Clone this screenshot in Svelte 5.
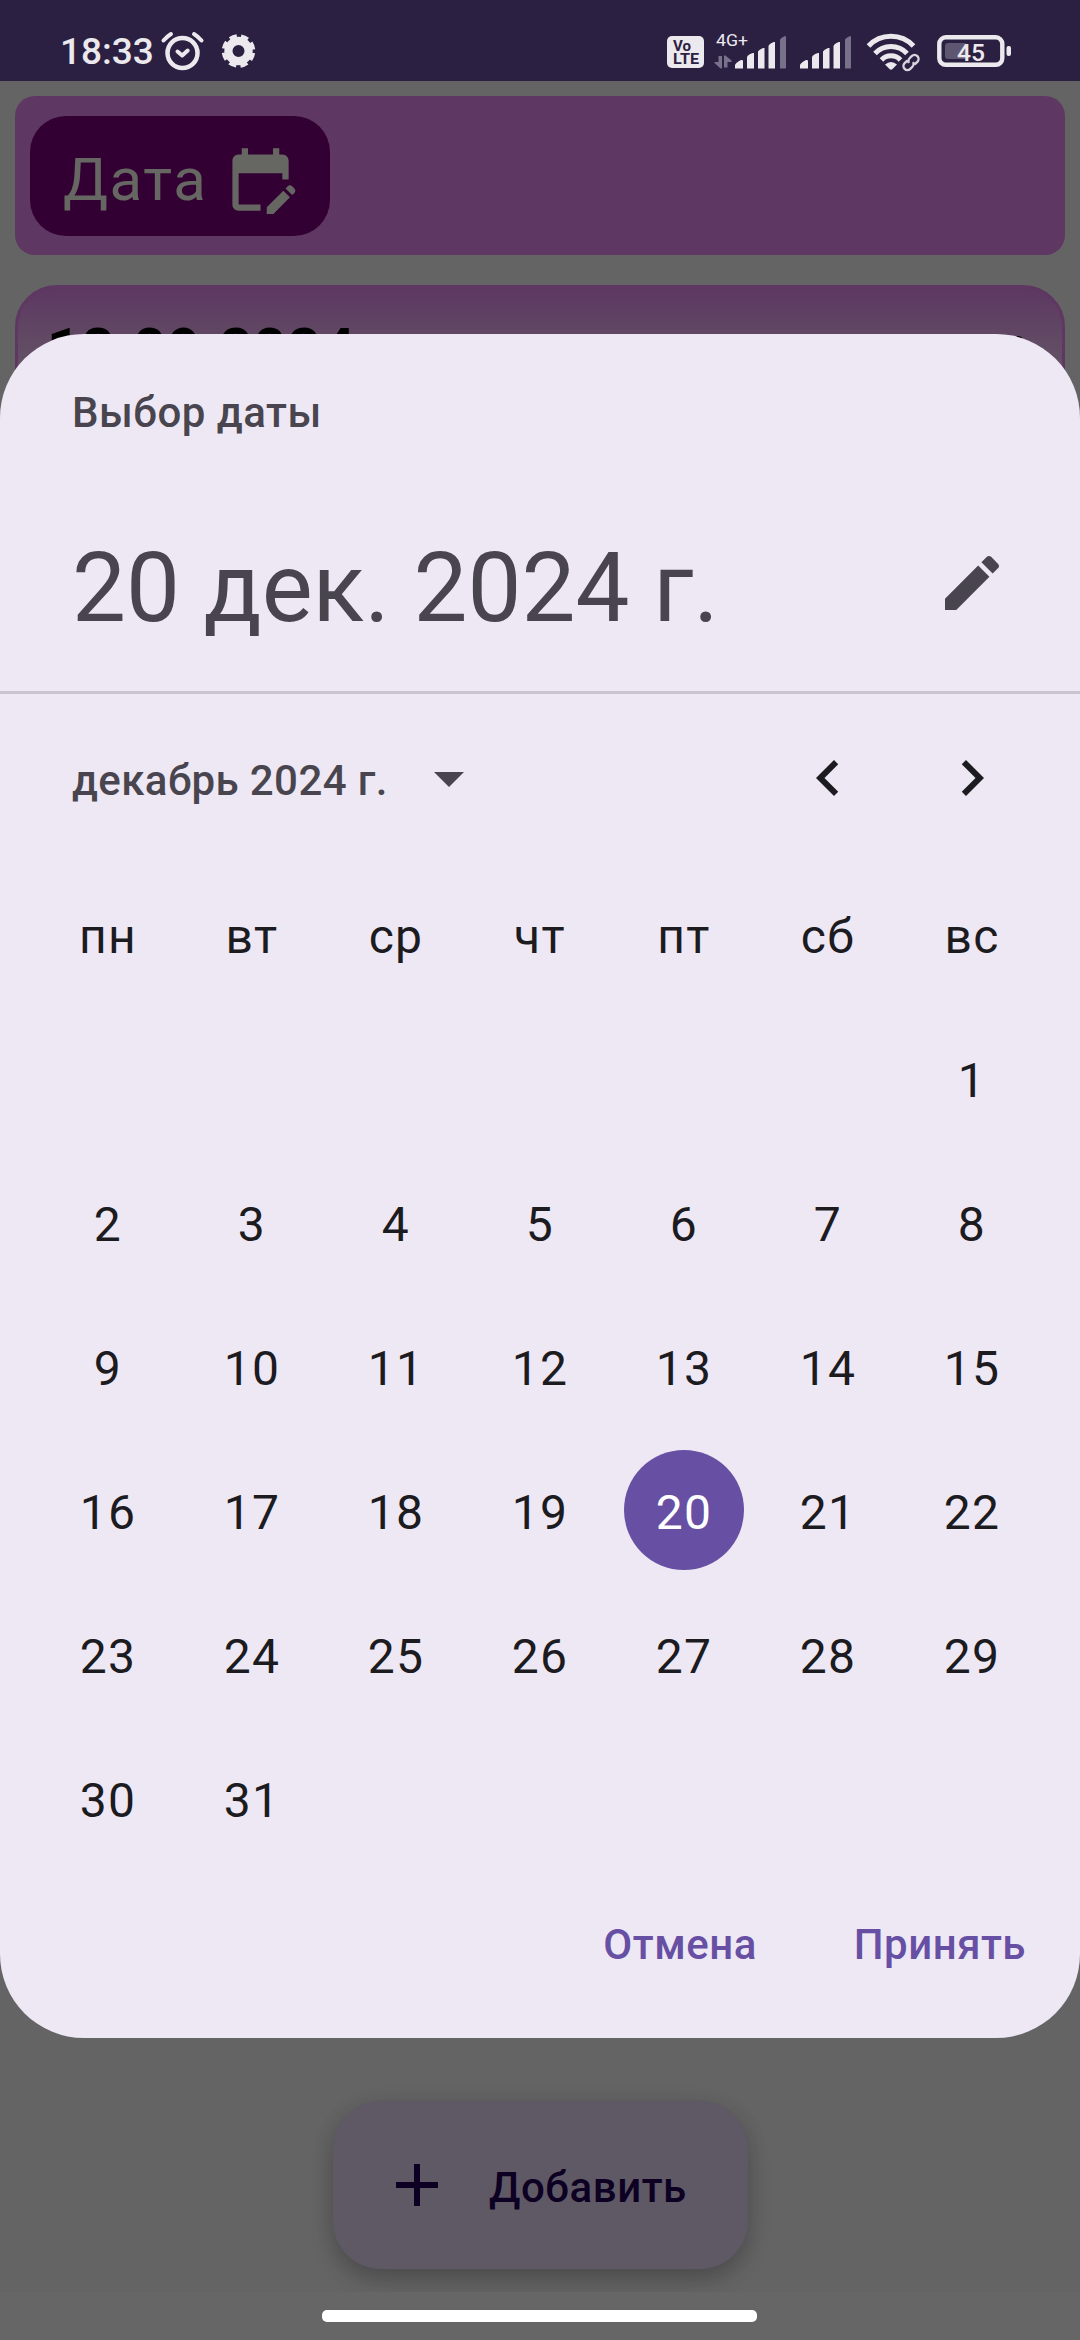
<script>
  const weekdays = ['пн', 'вт', 'ср', 'чт', 'пт', 'сб', 'вс'];
  const leadingBlanks = 6;
  const cells = Array.from({ length: 42 }, (_, i) => {
    const day = i - leadingBlanks + 1;
    return day >= 1 && day <= 31 ? day : null;
  });
  let selected = $state(20);
</script>

<div class="screen">
  <header class="status">
    <span class="clock">18:33</span>
    <svg class="left-icons" width="100" height="81" viewBox="158 0 100 81" fill="none" stroke="#ebe9ee">
      <circle cx="182.500" cy="53" r="15" stroke-width="4.500" />
      <path d="M163.500 40.500Q167 36.500 171 34M194 34q4 2.500 7.500 6.500" stroke-width="4" stroke-linecap="round" />
      <path d="M177.500 51.500l4.700 4 5.500-5" stroke-width="4" stroke-linecap="round" stroke-linejoin="round" />
      <circle cx="238.500" cy="51" r="10.100" stroke-width="8.200" />
      <circle cx="238.500" cy="51" r="15" stroke-width="3.600" stroke-dasharray="7.400 4.381" stroke-dashoffset="-2.190" />
    </svg>
    <svg class="right-icons" width="350" height="81" viewBox="665 0 350 81">
      <rect x="667" y="36" width="37" height="32" rx="5" fill="#ebe9ee" />
      <text class="volte" x="673" y="50.500" textLength="18" lengthAdjust="spacingAndGlyphs">Vo</text>
      <text class="volte" x="673" y="64" textLength="26" lengthAdjust="spacingAndGlyphs">LTE</text>
      <text class="net" x="716" y="46" textLength="32" lengthAdjust="spacingAndGlyphs">4G+</text>
      <g fill="#77718a">
        <path d="M718.500 56h3.500v12q-1 1-2 0l-5.500-5v-1h4zM727.500 67.500H724V56q1-1.500 2 0l5.500 4.500v1.500h-4z" />
        <path d="M780 68V39.500q1-2 5-3.500 1 0 1 1v31q0 .5-.5.500h-5q-.5 0-.5-.5zM845 68V39.500q1-2 5-3.500 1 0 1 1v31q0 .5-.5.500h-5q-.5 0-.5-.5z" />
      </g>
      <g fill="#ebe9ee">
        <path d="M735 68.500v-3.500q1-2.500 6-5 2-.5 2 1v7.500zM747 68.500V57q1-2.500 6-4h1v15.500zM758 68.500V51.500q1-2 5-3.500h1.500v20.500zM768.500 68.500V46q1-2.500 5.500-4h1v26.500z" />
        <path d="M800 68.500v-3.500q1-2.500 6-5 2-.5 2 1v7.500zM812 68.500V57q1-2.500 6-4h1v15.500zM823 68.500V51.500q1-2 5-3.500h1.500v20.500zM833.500 68.500V46q1-2.500 5.500-4h1v26.500z" />
        <path d="M885 64.500q6-5 12 0l-4.500 4.500q-1.500 1.500-3 0z" />
        <rect x="1006.500" y="46" width="4.500" height="10" rx="2" />
      </g>
      <g fill="none" stroke="#ebe9ee" stroke-width="5">
        <path d="M868.500 46a31 31 0 0 1 45 0M875 53.500a22 22 0 0 1 32 0M881.500 60a13 13 0 0 1 19 0" />
      </g>
      <g transform="rotate(-45 911 62.500)" fill="none">
        <rect x="899" y="56" width="24" height="13" rx="6" fill="#2b2042" />
        <path d="M909 58.500h-3a4 4 0 0 0 0 8h3a4 4 0 0 0 3.500-2M913 66.500h3a4 4 0 0 0 0-8h-3a4 4 0 0 0-3.500 2" stroke="#d7d4dc" stroke-width="2.400" stroke-linecap="round" />
      </g>
      <rect x="945" y="43" width="22" height="16" rx="3" fill="#5f5672" />
      <rect x="939.300" y="37.300" width="63" height="27.500" rx="6.500" fill="none" stroke="#ebe9ee" stroke-width="4.400" />
      <text class="battery" x="957" y="61" textLength="28" lengthAdjust="spacingAndGlyphs">45</text>
    </svg>
  </header>

  <main class="page">
    <section class="toolbar">
      <button class="date-button">
        <span>Дата</span>
        <svg width="75" height="75" viewBox="0 0 24 24" fill="#666662">
          <path d="M12 22H5c-1.110 0-2-.9-2-2L3.010 6c0-1.100.88-2 1.990-2h1V2h2v2h8V2h2v2h1c1.100 0 2 .9 2 2v6h-2v-2H5v10h7v2zm10.130-5.010.71-.71c.39-.39.39-1.020 0-1.410l-.71-.71c-.39-.39-1.020-.39-1.410 0l-.71.71 2.120 2.120zm-.71.71-5.300 5.300H14v-2.120l5.300-5.300 2.120 2.120z" />
        </svg>
      </button>
    </section>
    <section class="card">
      <span>18.09.2024</span>
      <svg width="12" height="12" viewBox="0 0 12 12"><circle cx="6" cy="6" r="6" /></svg>
    </section>
    <div class="bottom">
      <button class="fab">
        <svg width="72" height="72" viewBox="0 0 24 24" fill="#0d0023"><path d="M19 13h-6v6h-2v-6H5v-2h6V5h2v6h6v2z" /></svg>
        <span>Добавить</span>
      </button>
    </div>
  </main>
  <footer class="nav"><span class="handle"></span></footer>

  <div class="dialog">
    <div class="head">
      <div class="title">Выбор даты</div>
      <div class="headline">
        <span>20 дек. 2024 г.</span>
        <svg width="72" height="72" viewBox="0 0 24 24" fill="#49454f"><path d="M3 17.250V21h3.750L17.810 9.940l-3.750-3.750L3 17.250zM20.710 7.040c.39-.39.39-1.020 0-1.410l-2.340-2.340c-.39-.39-1.020-.39-1.410 0l-1.830 1.830 3.750 3.750 1.830-1.830z" /></svg>
      </div>
    </div>
    <div class="month">
      <span class="month-label">декабрь 2024 г.</span>
      <svg width="72" height="72" viewBox="0 0 24 24" fill="#49454f"><path d="M7 10l5 5 5-5z" /></svg>
      <div class="arrows">
        <svg width="72" height="72" viewBox="0 0 24 24" fill="#1c1b1f"><path d="M15.410 16.590L10.830 12l4.580-4.590L14 6l-6 6 6 6z" /></svg>
        <svg width="72" height="72" viewBox="0 0 24 24" fill="#1c1b1f"><path d="M8.590 16.590L13.170 12 8.590 7.410 10 6l6 6-6 6z" /></svg>
      </div>
    </div>
    <div class="grid">
      {#each weekdays as name}
        <div class="cell"><span class="day">{name}</span></div>
      {/each}
      {#each cells as day}
        <div class="cell">
          {#if day}
            <button class="day" class:selected={day === selected} onclick={() => (selected = day)}>{day}</button>
          {/if}
        </div>
      {/each}
    </div>
    <div class="actions"><button>Отмена</button><button>Принять</button></div>
  </div>
</div>

<style>
  :global(body) { margin: 0; background: #646464; }
  .screen { position: relative; width: 1080px; height: 2340px; overflow: hidden; display: flex; flex-direction: column; background: #646464; font-family: Roboto, sans-serif; }
  .screen * { box-sizing: border-box; }
  button { border: 0; background: none; padding: 0; margin: 0; font: inherit; color: inherit; letter-spacing: inherit; }
  svg { display: block; flex: none; }

  .status { height: 81px; padding: 0 65px 0 60px; background: #2b2042; display: flex; color: #ebe9ee; flex: none; }
  .clock { width: 98px; font-size: 37px; font-weight: 500; line-height: 40px; padding-top: 32px; white-space: nowrap; }
  .right-icons { margin-left: auto; }
  .volte { font-size: 14px; font-weight: 700; fill: #2b2042; }
  .net { font-size: 16.5px; fill: #ebe9ee; }
  .battery { font-size: 24.5px; font-weight: 500; fill: #ebe9ee; }

  .page { flex: 1; min-height: 0; display: flex; flex-direction: column; padding: 15px 15px 0; overflow: hidden; }
  .toolbar { height: 159px; flex: none; border-radius: 20px; background: #5e3862; padding: 20px 15px; }
  .date-button { display: flex; align-items: center; justify-content: space-between; width: 300px; height: 120px; padding: 7px 32px 0 33px; border-radius: 36px; background: #330033; color: #666662; font-size: 60px; line-height: 75px; letter-spacing: 1.5px; }
  .card { display: flex; justify-content: space-between; margin-top: 30px; height: 300px; flex: none; padding: 26px 38px 0 29px; border: 3px solid #5e3862; border-radius: 42px; background: linear-gradient(#5e3862 0, #5e3c62 12px, #645666 90px); color: #000; font-size: 58px; font-weight: 700; line-height: 70px; letter-spacing: 0.9px; }
  .card svg { margin-top: 22px; }
  .bottom { display: flex; justify-content: center; margin-top: auto; padding: 0 0 23px 1px; }
  .fab { display: flex; align-items: center; gap: 36px; width: 415px; height: 168px; padding-left: 48px; border-radius: 48px; background: #5f5966; color: #0d0023; font-size: 42px; font-weight: 500; letter-spacing: 0.55px; box-shadow: 0 11px 22px rgba(0, 0, 0, 0.2), 0 2px 22px rgba(0, 0, 0, 0.07); }
  .fab span { line-height: 60px; padding-top: 5px; }
  .nav { display: flex; justify-content: center; height: 48px; flex: none; padding: 18px 1px 0 0; background: #666; }
  .handle { width: 435px; height: 12px; border-radius: 5px; background: #fff; }

  .dialog { position: absolute; left: 0; top: 334px; width: 1080px; height: 1704px; border-radius: 84px; overflow: hidden; background: #eee8f4; color: #49454f; }
  .head { height: 360px; padding: 49px 72px 0; border-bottom: 3px solid #cac4d0; }
  .title, .month-label { font-size: 42px; font-weight: 500; line-height: 60px; letter-spacing: 0.4px; white-space: nowrap; }
  .title { letter-spacing: 0.5px; }
  .headline { display: flex; justify-content: space-between; margin-top: 85px; font-size: 96px; line-height: 120px; }
  .headline svg { margin-top: 19px; }
  .month { display: flex; align-items: center; height: 168px; padding: 0 72px; }
  .month-label { width: 341px; padding-top: 5px; }
  .arrows { display: flex; gap: 72px; margin-left: auto; }
  .grid { display: grid; grid-template-columns: repeat(7, 144px); grid-auto-rows: 144px; height: 1008px; padding: 0 36px; color: #1c1b1f; }
  .cell { display: grid; place-items: center; }
  .day { width: 120px; height: 120px; border-radius: 50%; padding-top: 5px; font-size: 48px; line-height: 115px; letter-spacing: 1.3px; text-align: center; }
  .selected { background: #6750a4; color: #fff; }
  .actions { display: flex; justify-content: flex-end; align-items: center; gap: 97px; height: 168px; padding: 0 54px 18px 0; color: #6750a4; font-size: 42px; font-weight: 500; line-height: 60px; letter-spacing: 0.5px; }
</style>
